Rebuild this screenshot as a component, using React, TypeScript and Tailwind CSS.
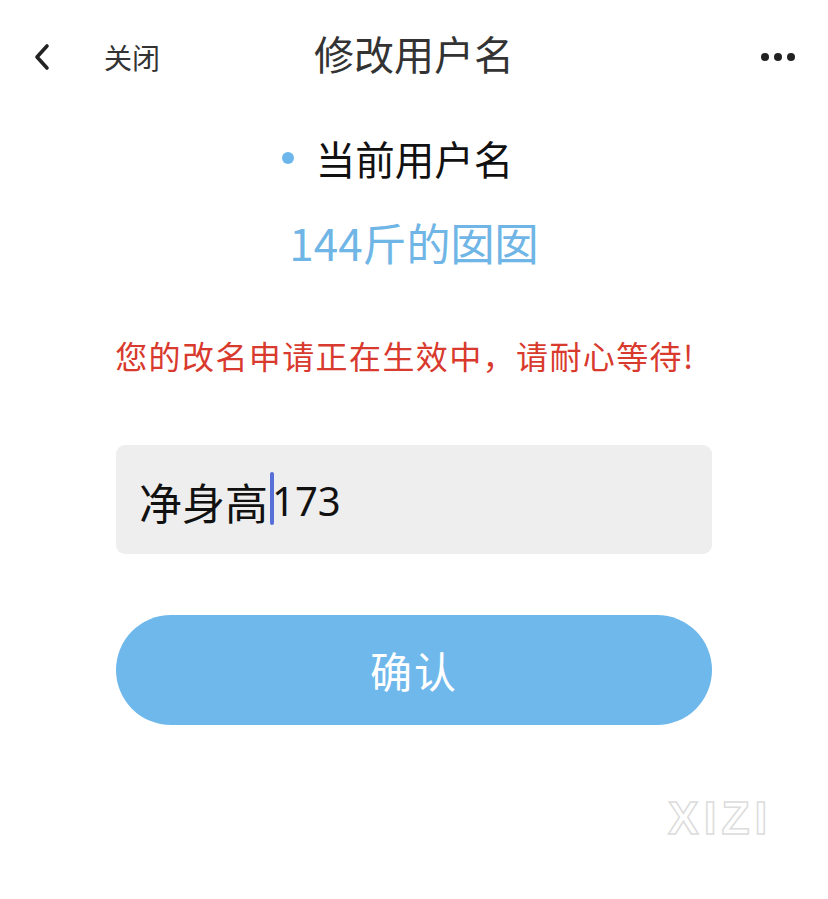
import React from "react";

export default function App() {
  return (
    <div className="w-[828px] h-[899px] bg-white flex flex-col relative" style={{ fontFamily: '"Noto Sans CJK SC", "Noto Sans", sans-serif' }}>
      {/* Header */}
      <div className="h-[112px] flex items-center relative px-[34px]">
        <svg width="18" height="28" viewBox="0 0 18 28" className="mt-[2px] ml-[-1px]">
          <path d="M14 3 L4 14 L14 25" fill="none" stroke="#222" strokeWidth="3.6" strokeLinecap="round" strokeLinejoin="round" />
        </svg>
        <span className="ml-[53px] text-[28px] text-[#333] leading-none mt-[2px]">关闭</span>
        <div className="absolute left-0 right-0 top-0 h-[106px] flex items-center justify-center pointer-events-none">
          <span className="text-[40px] text-[#333] leading-none">修改用户名</span>
        </div>
        <div className="ml-auto flex gap-[5px] mr-[-1px] mt-[2px]">
          <span className="w-[8px] h-[8px] rounded-full bg-[#222]" />
          <span className="w-[8px] h-[8px] rounded-full bg-[#222]" />
          <span className="w-[8px] h-[8px] rounded-full bg-[#222]" />
        </div>
      </div>

      {/* Current username label */}
      <div className="flex items-center justify-center mt-[26px] pr-[33px]">
        <span className="w-[12px] h-[12px] rounded-full bg-[#6db6ec] mr-[22px]" />
        <span className="text-[39.5px] text-[#111] leading-none">当前用户名</span>
      </div>

      <div className="flex justify-center mt-[42px]">
        <span className="text-[44px] text-[#6fb5e6] leading-none">144斤的囡囡</span>
      </div>

      <div className="flex justify-center mt-[75px] pr-[18px]">
        <span className="text-[32px] text-[#d93a2e] leading-none tracking-[1.4px]">您的改名申请正在生效中，请耐心等待!</span>
      </div>

      {/* Input */}
      <div className="mx-[116px] mt-[74px] h-[109px] rounded-[9px] bg-[#eeeeee] flex items-center px-[23px]">
        <span className="text-[43px] text-[#111] leading-none mt-[4px]">净身高</span>
        <span className="w-[4px] h-[53px] rounded-[2px] bg-[#5670d8] ml-[2px] mr-[-2px] mt-[-2px]" />
        <span className="text-[40px] text-[#111] leading-none mt-[4px]" style={{ fontFamily: '"Noto Sans", sans-serif' }}>173</span>
      </div>

      {/* Button */}
      <div className="mx-[116px] mt-[61px] h-[110px] rounded-full bg-[#6fb8ec] flex items-center justify-center">
        <span className="text-[42px] text-white leading-none tracking-[2px]">确认</span>
      </div>

      {/* Watermark */}
      <div className="absolute left-[668px] top-[795px] text-[46px] font-bold leading-none text-transparent [-webkit-text-stroke:1.5px_#dcdcdc] tracking-[5px]" style={{ fontFamily: '"Liberation Sans", sans-serif' }}>
        XIZI
      </div>
    </div>
  );
}
